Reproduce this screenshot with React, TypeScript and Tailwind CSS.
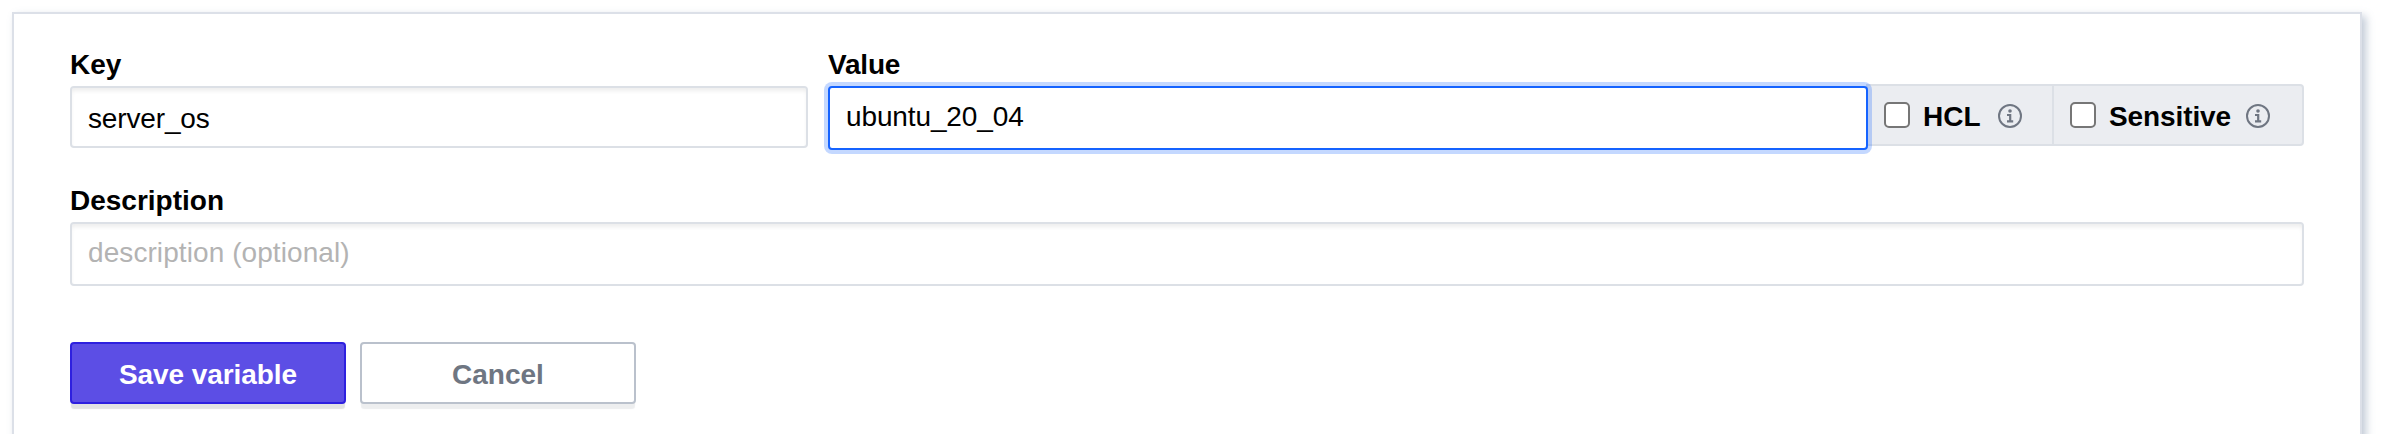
import React from "react";

function InfoIcon() {
  return (
    <svg className="relative top-px size-6 shrink-0" viewBox="0 0 24 24" fill="none" stroke="#6f7682">
      <circle cx="12" cy="12" r="11" strokeWidth="2" />
      <circle cx="12" cy="7" r="1.8" fill="#6f7682" stroke="none" />
      <path d="M9 11H12.2V17.4M9 17.4H15.2" strokeWidth="2.2" />
    </svg>
  );
}

function Option({ label, className }: { label: string; className: string }) {
  return (
    <label className={`flex h-full items-center ${className}`}>
      <input
        type="checkbox"
        className="size-[26px] shrink-0 appearance-none rounded-[5px] border-2 border-[#767676] bg-white"
      />
      <span className="ml-[13px] mr-[15px] w-[122px] pt-[3px] font-bold leading-8 group-data-[short=true]:w-[60px]">{label}</span>
      <InfoIcon />
    </label>
  );
}

const field =
  "block w-full rounded-[4px] border-2 border-[#dce0e6] bg-white px-4 text-[28px] leading-8 text-black shadow-[inset_0_4px_4px_-1px_rgba(0,0,0,0.07)] outline-none placeholder:text-[#b3b3b3] placeholder:opacity-100";

export default function App() {
  return (
    <div className="h-[434px] overflow-hidden bg-white pl-3 pt-3 font-['Liberation_Sans',Arial,sans-serif] text-[28px] text-black">
      <div className="h-[500px] w-[2350px] border-2 border-[#dce0e8] bg-white px-14 pt-[34px] shadow-[4px_4px_8px_0_rgba(110,130,160,0.42)]">
        <div className="flex">
          <div className="w-[738px]">
            <label className="block h-[38px] pt-px font-bold leading-8">Key</label>
            <input className={`${field} h-[62px] pt-1 tracking-[-0.15px]`} defaultValue="server_os" />
          </div>
          <div className="ml-5 w-[1040px]">
            <label className="block h-[38px] pt-px font-bold leading-8 tracking-[-0.2px]">Value</label>
            <input
              className="relative z-10 block h-16 w-full rounded-[4px] border-2 border-[#1563ff] bg-white px-4 pb-[3px] text-[28px] leading-8 tracking-[-0.12px] shadow-[0_0_0_4px_rgba(21,99,255,0.25)] outline-none"
              defaultValue="ubuntu_20_04"
            />
          </div>
          <div className="-ml-0.5 mt-9 flex h-[62px] w-[438px] rounded-r-[4px] border-2 border-[#dce0e6] bg-[#ebedf1]">
            <div className="group h-full w-[186px] border-r-2 border-[#dce0e6]" data-short="true">
              <Option label="HCL" className="pl-4" />
            </div>
            <div className="group h-full">
              <Option label="Sensitive" className="pl-4 tracking-[-0.1px]" />
            </div>
          </div>
        </div>
        <div className="mt-[34px]">
          <label className="block h-[38px] pt-px font-bold leading-8">Description</label>
          <input className={`${field} h-16 pb-[3px] tracking-[0.08px]`} placeholder="description (optional)" />
        </div>
        <div className="mt-14 flex gap-3.5 font-bold leading-8">
          <button className="h-[62px] w-[276px] rounded-[4px] border-2 border-[#2e20df] bg-[#5c4ee5] pt-[3px] tracking-[-0.08px] text-white shadow-[0_6px_1px_-1px_rgba(30,35,40,0.13)]">
            Save variable
          </button>
          <button className="h-[62px] w-[276px] rounded-[4px] border-2 border-[#bac1cc] bg-white pt-[3px] text-[#6f7682] shadow-[0_6px_1px_-1px_rgba(30,35,50,0.08)]">
            Cancel
          </button>
        </div>
      </div>
    </div>
  );
}
